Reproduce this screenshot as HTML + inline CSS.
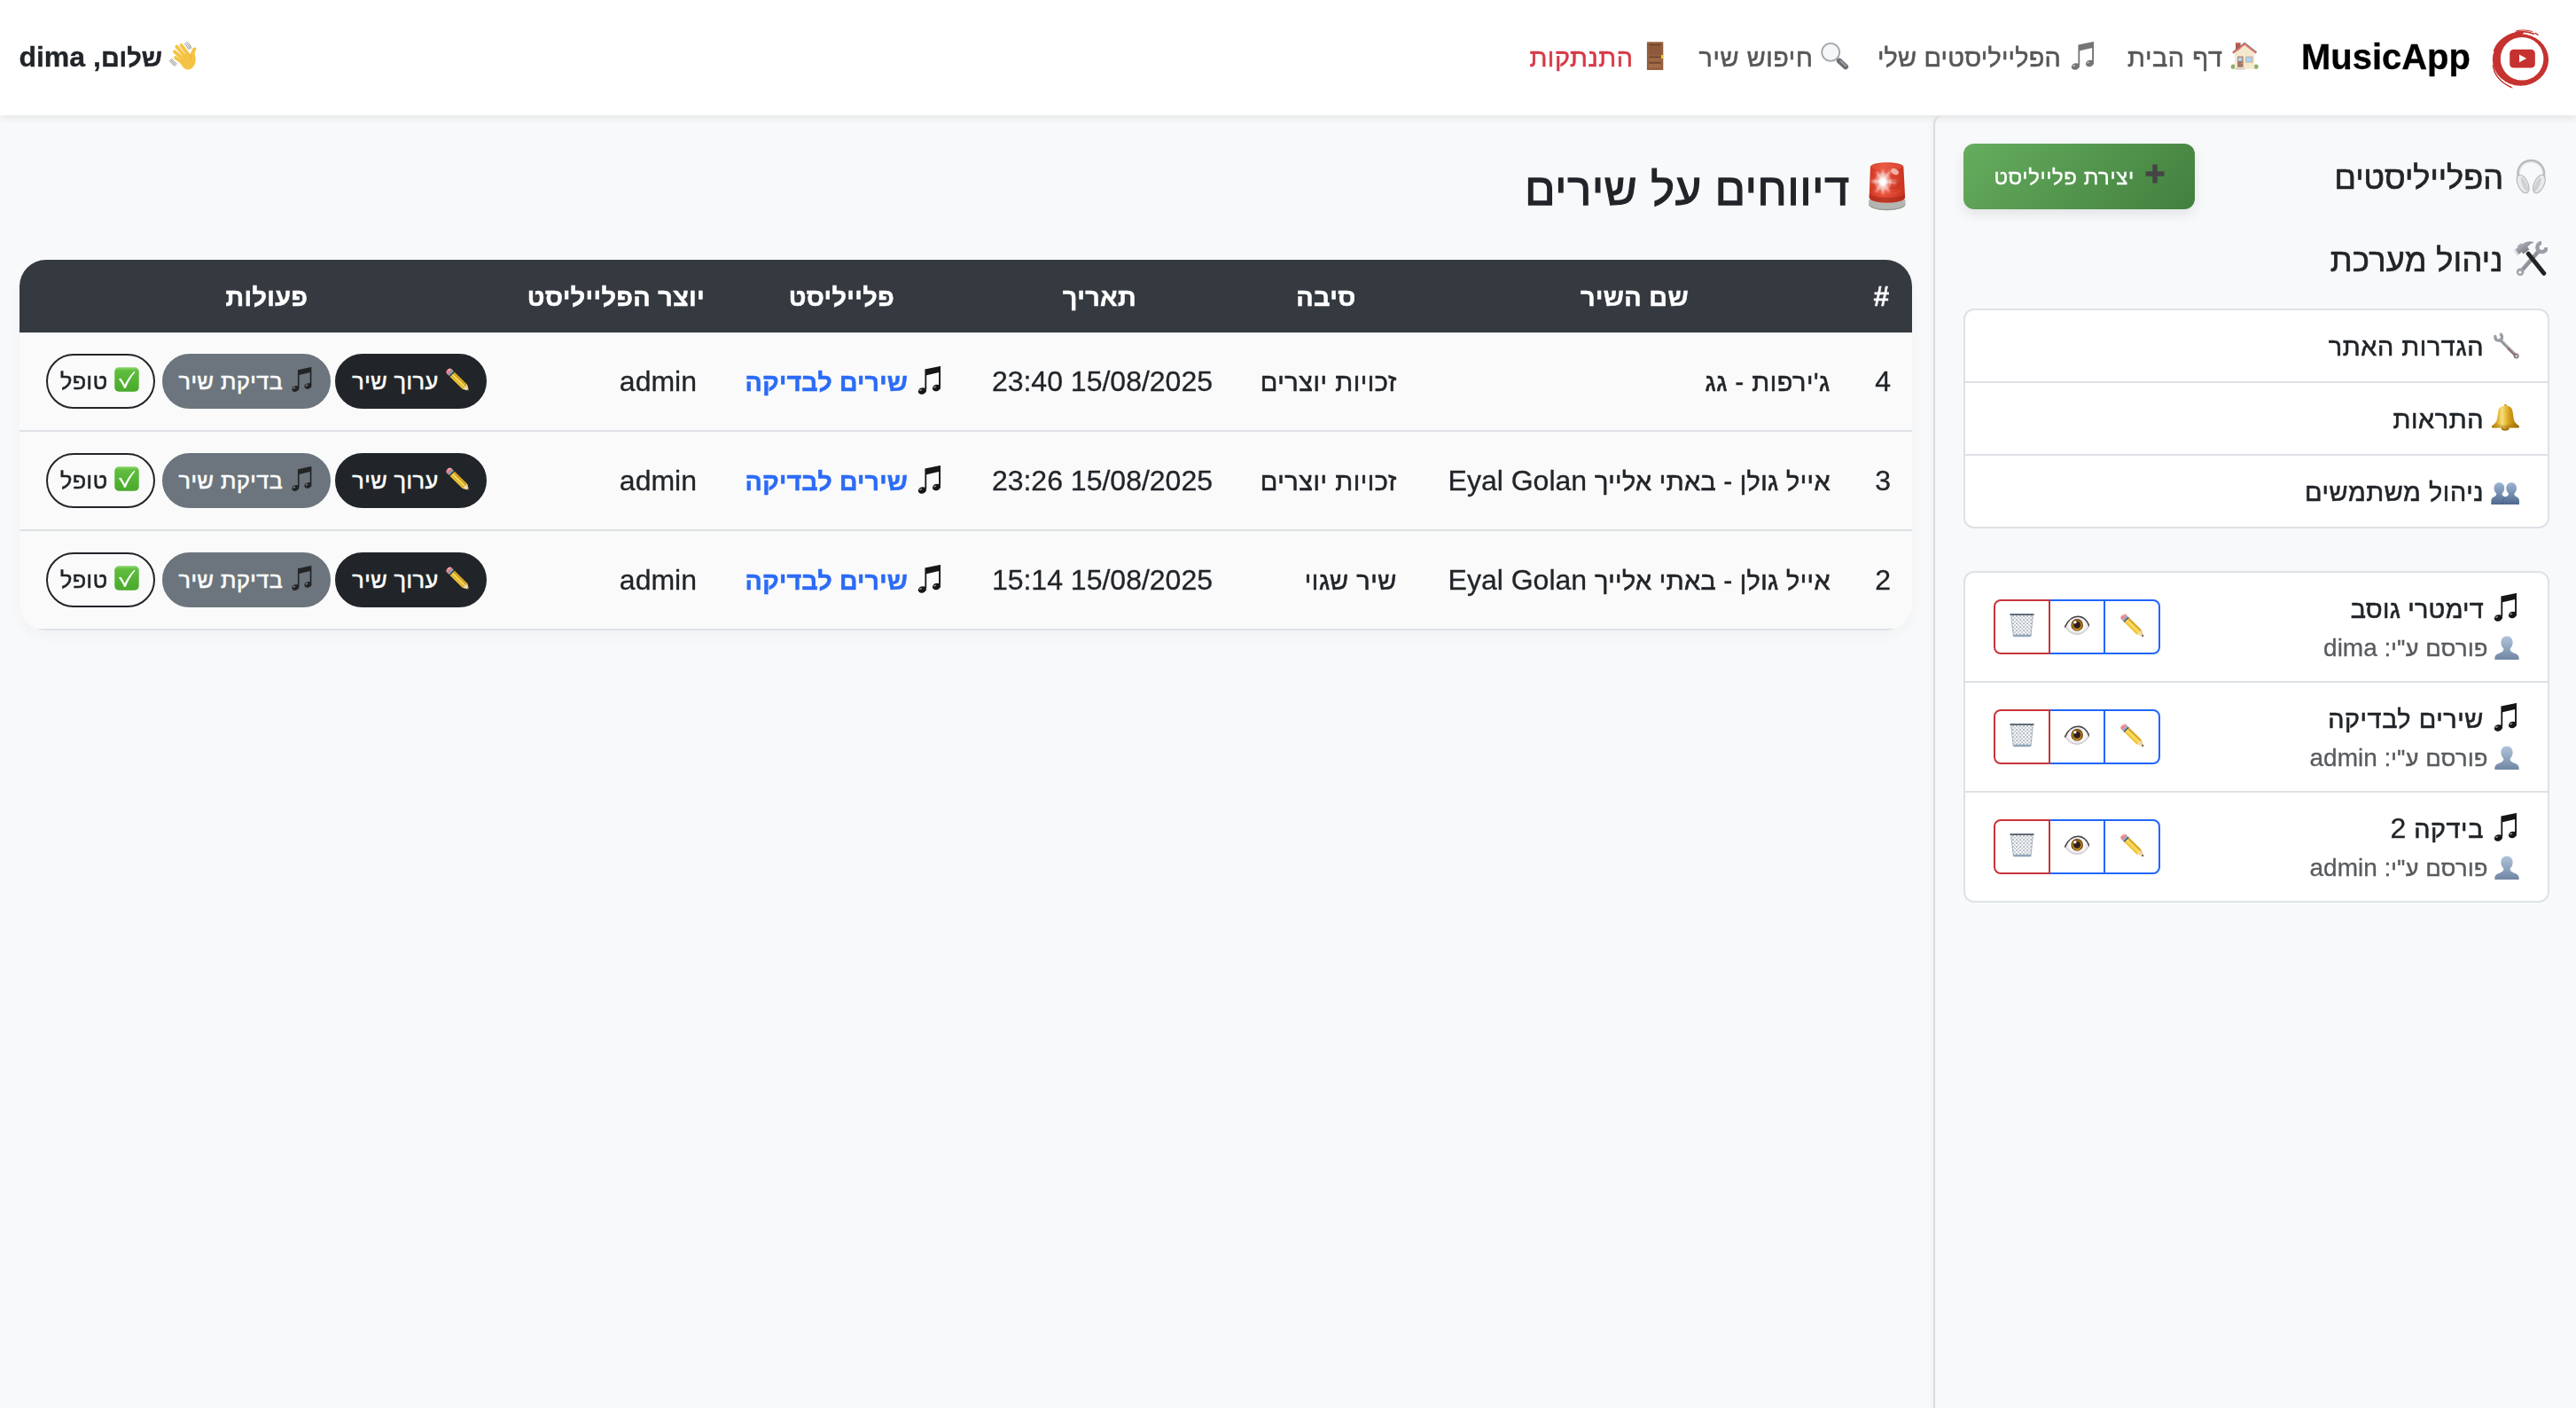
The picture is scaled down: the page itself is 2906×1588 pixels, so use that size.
<!DOCTYPE html>
<html lang="he" dir="rtl">
<head>
<meta charset="utf-8">
<title>MusicApp - דיווחים על שירים</title>
<style>
*{box-sizing:border-box}
html,body{margin:0;padding:0}
body{width:2906px;height:1588px;overflow:hidden;background:#f8f9fa;color:#212529;
 font-family:"Liberation Sans","DejaVu Sans",sans-serif;font-size:32px;line-height:48px;direction:rtl;position:relative;-webkit-text-stroke:.3px currentColor}
.e{display:inline-block;width:1em;height:1em;vertical-align:-0.14em;overflow:visible;color:#161616}
.h{font-size:.9em;letter-spacing:.02em;-webkit-text-stroke:.55px currentColor;margin-right:-.03em}
b .h,.bd .h{letter-spacing:0;-webkit-text-stroke:.45px currentColor}
a{text-decoration:none;color:inherit}
/* NAVBAR */
.nav{position:absolute;left:0;top:0;width:2906px;height:130px;background:#fff;box-shadow:0 4px 8px rgba(0,0,0,.075);z-index:5}
.nav .logo{position:absolute;left:2808px;top:28px;width:72px;height:74px}
.nav .brand{position:absolute;right:119px;top:40px;font-size:40px;line-height:48px;font-weight:bold;color:#000;direction:ltr}
.nav .lnk{position:absolute;top:39.5px;line-height:48px;white-space:nowrap;color:#575757}
.nav .lnk .e{opacity:.9}
.nav .lnk .e.n{opacity:1;color:#757578}
.nav .lnk.out{color:#d63a48}
.nav .lnk.w2 .h{letter-spacing:.2px}
.hd .h{letter-spacing:.3px;-webkit-text-stroke:.5px currentColor}
.ls1 .h{letter-spacing:.38px}
.ls2 .h{letter-spacing:.23px}
.side h5.ls3 .h{letter-spacing:.36px}
.newbtn .h{letter-spacing:.62px;-webkit-text-stroke:.4px currentColor}
.nav .lnk.out .e{opacity:1}
.nav .hello{position:absolute;right:2683px;top:39.5px;line-height:48px;font-weight:bold;color:#212529;white-space:nowrap}
/* SIDEBAR */
.side{position:absolute;left:2181px;top:130px;width:725px;height:1470px;border-left:2px solid #dcdcdc;border-top-left-radius:10px;background:#f8f9fa;box-shadow:-3px 0 6px rgba(0,0,0,.035)}
.side h5{position:absolute;margin:0;right:32px;font-size:40px;line-height:48px;font-weight:normal;white-space:nowrap;color:#212529}
.side h5 .h{letter-spacing:0;-webkit-text-stroke:.7px currentColor}
.newbtn{position:absolute;left:32px;top:32px;width:261px;height:74px;border-radius:12px;color:#fff;font-size:26.5px;line-height:72px;text-align:right;
 background:linear-gradient(135deg,#66ad5e 0%,#417f3e 100%);box-shadow:0 6px 14px rgba(0,0,0,.09);white-space:nowrap}
.card{position:absolute;left:32px;width:661px;background:#fff;border:2px solid #dee2e6;border-radius:12px;overflow:hidden}
.li{height:82px;border-bottom:2px solid #dee2e6;padding:16px 32px 0 0;line-height:48px;white-space:nowrap}
.li:last-child{border-bottom:0;height:80px}
.pl{height:124px;border-bottom:2px solid #dee2e6;position:relative}
.pl:last-child{border-bottom:0;height:122px}
.pl .t{position:absolute;right:32px;top:16px;font-size:32px;line-height:48px;white-space:nowrap}
.pl .s{position:absolute;right:32px;top:64px;font-size:28px;line-height:42px;color:#595c5f;white-space:nowrap}
.pl .s .e{opacity:.8}
.bg{position:absolute;left:32px;top:30px;height:62px;width:188px;direction:rtl;display:flex}
.bg span{display:block;width:64px;height:62px;border:2px solid #2166fb;margin-left:-2px;text-align:center;font-size:28px;line-height:56px}
.bg span:first-child{border-radius:0 8px 8px 0}
.bg span:last-child{border-radius:8px 0 0 8px;border-color:#c9333a;margin-left:0;position:relative}
/* MAIN */
h2{position:absolute;margin:0;right:749px;top:178px;font-size:56px;line-height:67px;font-weight:500;white-space:nowrap;color:#212529}
h2 .h{-webkit-text-stroke:1.3px currentColor;letter-spacing:.016em}
.tbl{position:absolute;left:22px;top:293px;width:2135px;height:418px;border-radius:30px;overflow:hidden;background:#fafafa;box-shadow:0 6px 20px rgba(0,0,0,.045)}
.tbl .hd{position:absolute;left:0;top:0;width:100%;height:82px;background:#343a40;color:#fff;font-weight:bold}
.tbl .hd div{position:absolute;top:17px;line-height:48px;text-align:center;white-space:nowrap}
.row{position:absolute;left:0;width:100%;height:112px;border-bottom:2px solid #dee2e6}
.row .c{position:absolute;top:31px;line-height:48px;white-space:nowrap}
.row a.p{color:#2b6bf7;font-weight:bold}
.b{position:absolute;top:24px;height:62px;border-radius:31px;font-size:28px;line-height:58px;text-align:center;white-space:nowrap;border:2px solid transparent}
.b.k{background:#212529;color:#fff;border-color:#212529}
.b.g{background:#6c757d;color:#fff;border-color:#6c757d}
.b.o{background:transparent;color:#212529;border-color:#212529;padding-right:2.5px}
.b .e{vertical-align:-.105em}
</style>
</head>
<body>
<svg width="0" height="0" style="position:absolute"><defs>
<linearGradient id="g-bust" x1="0" y1="0" x2="0" y2="1"><stop offset="0" stop-color="#9db6d3"/><stop offset="1" stop-color="#4d688d"/></linearGradient>
<linearGradient id="g-bell" x1="0" y1="0" x2="1" y2="0"><stop offset="0" stop-color="#a8740a"/><stop offset=".22" stop-color="#e3b32c"/><stop offset=".38" stop-color="#f7e07c"/><stop offset=".62" stop-color="#d8a21a"/><stop offset="1" stop-color="#98690a"/></linearGradient>
<linearGradient id="g-chk" x1="0" y1="0" x2="0" y2="1"><stop offset="0" stop-color="#8ad86c"/><stop offset=".14" stop-color="#60bd3e"/><stop offset="1" stop-color="#49a92c"/></linearGradient>
<linearGradient id="g-sir" x1="0" y1="0" x2="1" y2="0"><stop offset="0" stop-color="#d23824"/><stop offset=".4" stop-color="#e8503a"/><stop offset="1" stop-color="#c9321f"/></linearGradient>
<linearGradient id="g-stl" x1="0" y1="0" x2="1" y2="1"><stop offset="0" stop-color="#cfd2d7"/><stop offset=".5" stop-color="#8f939a"/><stop offset="1" stop-color="#5f636a"/></linearGradient>
<radialGradient id="g-eye" cx=".5" cy=".5" r=".6"><stop offset=".5" stop-color="#fff"/><stop offset="1" stop-color="#c6bcc6"/></radialGradient>
<filter id="f-blur" x="-20%" y="-20%" width="140%" height="140%"><feGaussianBlur stdDeviation=".8"/></filter>
<pattern id="p-mesh" width="4.6" height="4.6" patternUnits="userSpaceOnUse"><rect width="4.6" height="4.6" fill="#fbfcfd"/><path d="M0 0L4.6 4.6M4.6 0L0 4.6" stroke="#6f7c8a" stroke-width=".55"/></pattern>

<symbol id="i-house" viewBox="0 0 32 32">
 <circle cx="3.3" cy="28.2" r="2.6" fill="#7fa858"/><circle cx="29" cy="28.2" r="2.6" fill="#7fa858"/>
 <rect x="6" y="1.2" width="5.6" height="9" fill="#b5493c"/>
 <path d="M4.9 13L16.2 4L27.3 13V30.7H4.9Z" fill="#f5e6c8"/>
 <path d="M2.5 11.9L16.2 1.2L29.8 11.9L28.6 13.7L16.2 4L3.7 13.7Z" fill="#e2675b"/>
 <path d="M2.5 11.9L16.2 1.2L29.8 11.9" fill="none" stroke="#5c5c5c" stroke-width="1"/>
 <rect x="8.1" y="16.6" width="6.5" height="12.2" fill="#9b6b5a"/>
 <rect x="8.9" y="17.8" width="4.4" height="4" fill="#a9d1f1"/>
 <circle cx="12.9" cy="24.5" r=".6" fill="#e8c44a"/>
 <rect x="17.3" y="16.6" width="8" height="6.9" fill="#b39a86"/>
 <rect x="18" y="17.3" width="6.4" height="5.5" fill="#a4cdf0"/>
 <rect x="6.1" y="29.7" width="10.7" height="1.9" fill="#cfcac4"/>
</symbol>

<symbol id="i-note" viewBox="0 0 32 32" fill="currentColor">
 <path d="M11.4 3.6L29 -.1V22.8H27.1V6.9L13.2 10.3V26.3H11.4Z"/>
 <ellipse cx="8.4" cy="28" rx="4.7" ry="3.6" transform="rotate(-20 8.4 28)"/>
 <ellipse cx="24.5" cy="24.5" rx="4.7" ry="3.6" transform="rotate(-20 24.5 24.5)"/>
 <ellipse cx="6.6" cy="27" rx="1.7" ry=".8" transform="rotate(-25 6.6 27)" fill="#fff" opacity=".55"/>
 <ellipse cx="22.7" cy="23.5" rx="1.7" ry=".8" transform="rotate(-25 22.7 23.5)" fill="#fff" opacity=".55"/>
</symbol>

<symbol id="i-mag" viewBox="0 0 32 32">
 <circle cx="11.2" cy="11.9" r="10" fill="#f5f6f7" stroke="#9c9fa3" stroke-width="1.8"/>
 <path d="M18.4 19.3L20.6 21.3" stroke="#a9acb0" stroke-width="2.4"/>
 <path d="M21 21.8L28 28.2" stroke="#5d6065" stroke-width="6.2" stroke-linecap="round"/>
 <path d="M22.2 21.8L28.3 27.3" stroke="#a2a8b0" stroke-width="1.2" stroke-linecap="round"/>
</symbol>

<symbol id="i-door" viewBox="0 0 32 32">
 <rect x="6.9" y=".2" width="18.4" height="31.8" rx=".6" fill="#94603e"/>
 <rect x="9.4" y="2.8" width="13.2" height="11.6" fill="#8c593a"/>
 <rect x="9.4" y="2.8" width="13.2" height="1.4" fill="#6a4128"/>
 <rect x="9.4" y="16.8" width="13.2" height="1.5" fill="#6a4128"/>
 <rect x="9.4" y="18.3" width="13.2" height="3.6" fill="#9f6947"/>
 <rect x="9.4" y="23.3" width="13.2" height="1.5" fill="#6a4128"/>
 <rect x="9.4" y="24.8" width="13.2" height="4.6" fill="#a36c49"/>
 <rect x="23" y="15" width="2.2" height="4.1" fill="#e9c83c"/>
</symbol>

<symbol id="i-wave" viewBox="0 0 32 32">
 <g stroke="#f5c343" stroke-width="3.8" stroke-linecap="round">
  <path d="M13.5 4L21 14"/><path d="M8.3 5.6L18 17"/><path d="M6 11.3L16 20"/><path d="M7 18L14.5 23.5"/>
 </g>
 <path d="M11.5 21.5L19.5 11L23 14.3C24.6 13 24.8 10 26.6 7.6C28 6 30.6 6.4 30.5 8.1C30.4 9.7 28.8 10.6 28.7 12.6C28.6 15.2 30.3 18 29.6 22.2C28.8 27.2 25 31.6 21 31.6C17 31.6 13.5 27.5 11.5 21.5Z" fill="#f5c343"/>
 <path d="M23 14.5C24.5 16 25 18 24.5 20" fill="none" stroke="#e3a634" stroke-width=".8" stroke-linecap="round"/>
 <g fill="none" stroke="#555" stroke-width=".65" stroke-linecap="round">
  <path d="M17.4 2.6Q20.6 4.8 21.8 8.6"/><path d="M18.6 1.3Q22.4 3.8 23.5 8"/><path d="M19.9 .3Q24 3 24.8 7.3"/>
  <path d="M.4 21.2Q2.4 25.2 6.3 27.3"/><path d="M1.6 20.3Q3.6 24 7.3 26.2"/><path d="M3 19.6Q4.8 23 8.3 25"/>
 </g>
</symbol>

<symbol id="i-hp" viewBox="0 0 32 32">
 <path d="M5.4 16C4.2 7.6 9.6 1.6 17 1.6C24.4 1.6 29.8 7.6 28.6 16" fill="none" stroke="#b9bbbe" stroke-width="2.2"/>
 <path d="M6.8 15C5.8 8.4 10.6 3.2 17 3.2C23.4 3.2 28.2 8.4 27.2 15" fill="none" stroke="#e6e7e9" stroke-width="1.1"/>
 <ellipse cx="9.7" cy="22.8" rx="4.5" ry="8.8" transform="rotate(-25 9.7 22.8)" fill="#e9eaeb" stroke="#b3b5b8" stroke-width=".9"/>
 <ellipse cx="24.3" cy="22.8" rx="4.5" ry="8.8" transform="rotate(25 24.3 22.8)" fill="#e9eaeb" stroke="#b3b5b8" stroke-width=".9"/>
 <ellipse cx="11.3" cy="23.6" rx="2" ry="7.2" transform="rotate(-25 11.3 23.6)" fill="#cfd0d2"/>
 <ellipse cx="22.7" cy="23.6" rx="2" ry="7.2" transform="rotate(25 22.7 23.6)" fill="#cfd0d2"/>
</symbol>

<symbol id="i-tools" viewBox="0 0 32 32">
 <path d="M7.6 28.4L23.6 10" stroke="url(#g-stl)" stroke-width="3.7" stroke-linecap="round"/>
 <circle cx="7.3" cy="28.6" r="3.4" fill="#9da1a8"/><circle cx="7.1" cy="28.9" r="1.3" fill="#f8f9fa"/>
 <path d="M30.9 6.4A4.1 4.1 0 1 1 26.4 2.3" fill="none" stroke="#9a9ea6" stroke-width="3.6"/>
 <path d="M14.6 12.2L28.6 29.8" stroke="#232323" stroke-width="4" stroke-linecap="round"/>
 <path d="M1.4 9.2L4.6 13.6L8.6 10.6L10 12.4L15.4 8.4L13.8 6C15.6 4 17.4 2.6 19.8 1.8C16.2 .2 12 1 9.2 3.4L8 2.6L4.4 5.2L5.2 6.4Z" fill="url(#g-stl)"/>
 <path d="M1.4 9.2L4.6 13.6L6 12.6L2.8 8.2Z" fill="#e3e5e8"/>
</symbol>

<symbol id="i-wrench" viewBox="0 0 32 32">
 <path d="M10.6 10.2L27.8 27.6" stroke="#8f9198" stroke-width="3.4" stroke-linecap="round"/>
 <path d="M20 20L27.8 27.6" stroke="#8a7476" stroke-width="3.4" stroke-linecap="round"/>
 <path d="M11.6 10L27 25.4" stroke="#c9ccd1" stroke-width=".9" stroke-linecap="round"/>
 <circle cx="28.6" cy="28.4" r="3" fill="#8b777a"/><circle cx="28.8" cy="28.6" r="1.1" fill="#fff"/>
 <path d="M10.2 3.6A3.9 3.9 0 1 1 5.4 5.1" fill="none" stroke="#9a9da4" stroke-width="3.4"/>
</symbol>

<symbol id="i-bell" viewBox="0.9 0 32 32" overflow="visible">
 <ellipse cx="17" cy="28" rx="4.5" ry="2.8" fill="#a9700a"/>
 <ellipse cx="16.4" cy="27.6" rx="2.2" ry="1.2" fill="#e3a83a" opacity=".8"/>
 <rect x="16" y=".9" width="2.6" height="2.4" rx=".9" fill="#c08a0c"/>
 <path d="M17.3 2.6C12.5 2.6 9.6 5 9.2 9L8 17C7.6 20.5 5.5 23 2 25.2C1.4 26.2 1.8 27.6 3 27.6H31.6C32.8 27.6 33.2 26.2 32.6 25.2C29.1 23 27 20.5 26.6 17L25.4 9C25 5 22.1 2.6 17.3 2.6Z" fill="url(#g-bell)"/>
 <path d="M5 23.4C11 25.6 23.6 25.6 29.6 23.4" fill="none" stroke="#8f6206" stroke-width="1" opacity=".45"/>
 <path d="M3 26.6H31.6" stroke="#8f6206" stroke-width="1.4" opacity=".5"/>
</symbol>

<symbol id="i-busts" viewBox="0 0 32 32" overflow="visible">
 <g fill="url(#g-bust)" transform="translate(-.1 -.3) scale(1.01)">
 <path d="M9.4 7.4C12.9 7.4 15.2 10 15.2 13.6C15.2 16.2 14 18.4 12.6 19.6C12.4 21.4 13.4 22.4 15.4 23.2C17.6 24 19 25.4 19 28V32H.4V28C.4 25.4 1.6 24 3.8 23.2C5.6 22.4 6.4 21.4 6.2 19.6C4.8 18.4 3.6 16.2 3.6 13.6C3.6 10 5.9 7.4 9.4 7.4Z"/>
 <path d="M23 7.4C26.5 7.4 28.8 10 28.8 13.6C28.8 16.2 27.6 18.4 26.2 19.6C26 21.4 27 22.4 28.6 23.2C30.6 24 31.8 25.4 31.8 28V32H13V28C13 25.4 14.6 24 17 23.2C19 22.4 20 21.4 19.8 19.6C18.4 18.4 17.2 16.2 17.2 13.6C17.2 10 19.5 7.4 23 7.4Z"/>
 </g>
 <path d="M13.4 32V28.4C13.4 26 14.8 24.4 17 23.4" fill="none" stroke="#3d5678" stroke-width=".7" opacity=".7"/>
</symbol>

<symbol id="i-bust" viewBox="0 0 32 32">
 <path d="M16 1.6C20.6 1.6 23.6 5 23.6 9.8C23.6 13.4 22 16.2 20.2 17.8C20 20.4 21.2 21.8 24.4 23C28.6 24.4 31.6 26 31.6 30V32H.4V30C.4 26 3.4 24.4 7.6 23C10.8 21.8 12 20.4 11.8 17.8C10 16.2 8.4 13.4 8.4 9.8C8.4 5 11.4 1.6 16 1.6Z" fill="url(#g-bust)"/>
</symbol>

<symbol id="i-pencil" viewBox="0 0 32 32">
 <g transform="translate(3.6 3.8) rotate(44.5)">
  <path d="M2.4 -4.3H4V4.3H2.4C.4 4.3 -.7 2.5 -.7 0C-.7 -2.5 .4 -4.3 2.4 -4.3Z" fill="#ee8488"/>
  <path d="M1.6 -3.2C.8 -2.4 .4 -1.2 .4 0" fill="none" stroke="#f9c0c2" stroke-width="1.1" stroke-linecap="round"/>
  <rect x="4" y="-4.3" width="2.6" height="8.6" fill="#93a7c2"/>
  <rect x="6.6" y="-4.3" width="1.6" height="8.6" fill="#3d424c"/>
  <rect x="8.2" y="-4.3" width="22.4" height="2.9" fill="#d8a722"/>
  <rect x="8.2" y="-1.4" width="22.4" height="3" fill="#fadb55"/>
  <rect x="8.2" y="1.6" width="22.4" height="2.7" fill="#f1c232"/>
  <path d="M30.6 -4.3L38.5 0L30.6 4.3Z" fill="#f6dca6"/>
  <path d="M30.6 -4.3L38.5 0L30.6 -1.4Z" fill="#e6c58a"/>
  <path d="M35.9 -1.4L38.5 0L35.9 1.4Z" fill="#26282c"/>
 </g>
</symbol>

<symbol id="i-eye" viewBox="0 0 32 32">
 <path d="M.4 18.2C5 8 12 4.6 17.5 4.6C24 4.6 29 9.6 32 17.1C27.5 24.4 22 27.9 16.5 27.9C10 27.9 4.6 24.4 .4 18.2Z" fill="url(#g-eye)"/>
 <circle cx="16.2" cy="15.9" r="7.8" fill="#6a3f10"/>
 <circle cx="16.2" cy="16.1" r="6.5" fill="#b98a18"/>
 <path d="M10.2 18.4A6.5 6.5 0 0 0 22.4 18A7 7 0 0 1 10.2 18.4Z" fill="#e0c030" opacity=".85"/>
 <circle cx="16.2" cy="15.7" r="4.9" fill="#5a3620"/>
 <circle cx="16.2" cy="15.7" r="3.7" fill="#2e1c22"/>
 <circle cx="13.6" cy="12.4" r="1.9" fill="#fff"/>
 <path d="M32 17.1C27.5 24.4 22 27.9 16.5 27.9C10 27.9 4.6 24.4 .4 18.2" fill="none" stroke="#b9adb4" stroke-width=".7"/>
 <path d="M.5 18.4C5 8.2 12 4.9 17.5 4.9C24 4.9 29 9.8 31.9 17.2" fill="none" stroke="#474344" stroke-width="1.7" stroke-linecap="round"/>
</symbol>

<symbol id="i-trash" viewBox="0 0 32 32">
 <path d="M1.8 3.2H30.2L27.4 30.6H5Z" fill="url(#p-mesh)"/>
 <path d="M1.8 3.2L5 30.6M30.2 3.2L27.4 30.6" fill="none" stroke="#8a98a8" stroke-width=".8"/>
 <rect x="4.7" y="28.2" width="23" height="2.8" rx="1.2" fill="#8fa5bb"/>
 <rect x=".4" y="1.2" width="31.2" height="2.3" rx="1.1" fill="#525960"/>
 <rect x="1" y="1" width="30" height=".8" rx=".4" fill="#8eaac8"/>
</symbol>

<symbol id="i-siren" viewBox="0 0 32 32">
 <path d="M4.1 24.2V27.2A11.8 3.8 0 0 0 27.7 27.2V24.2Z" fill="#b4b4b1"/>
 <path d="M4.1 26.4V27.2A11.8 3.8 0 0 0 27.7 27.2V26.4A11.8 3.8 0 0 1 4.1 26.4Z" fill="#9a9a97"/>
 <path d="M5.1 3C5.1 -.9 26.5 -.9 26.5 3L27.5 22.6C27.5 27.2 4.4 27.2 4.4 22.6Z" fill="url(#g-sir)"/>
 <ellipse cx="15.8" cy="2.9" rx="10.2" ry="2.1" fill="#ef6a52" opacity=".35"/>
 <path d="M4.5 20.4C8 23.4 24 23.4 27.4 20.4L27.5 22.6C27.5 27.2 4.4 27.2 4.4 22.6Z" fill="#a3281a" opacity=".6"/>
 <path d="M6.4 17.6C10 20.6 22 20.6 25.6 17.6C25 21.6 7 21.6 6.4 17.6Z" fill="#f0563e" opacity=".55"/>
 <g filter="url(#f-blur)"><g stroke="#fff" stroke-linecap="round" opacity=".92"><path d="M13.2 5.6V19.6" stroke-width="1.3"/><path d="M6.6 12.3L21.4 12.7" stroke-width="1.3"/><path d="M9.2 18.6L17.4 6.2" stroke-width="1.1"/><path d="M9.6 6.6L16.8 18.6" stroke-width="1.1"/></g>
 <circle cx="13.2" cy="12.5" r="3" fill="#fff"/></g>
 <circle cx="13.2" cy="12.5" r="5.6" fill="#fff" opacity=".28"/>
 <ellipse cx="20.8" cy="6" rx="2.7" ry="1.8" transform="rotate(28 20.8 6)" fill="#f7c3b8" opacity=".85"/>
 <path d="M19 12.4C22 12 24 13.2 23.4 15C22.8 16.6 20 17.2 18.6 16.4" fill="none" stroke="#b9301f" stroke-width=".9" opacity=".55"/>
</symbol>

<symbol id="i-check" viewBox="0 0 32 32">
 <rect x=".3" y=".3" width="31.4" height="31.4" rx="5.6" fill="url(#g-chk)"/>
 <path d="M5.5 15.4L8.6 14.5C10.6 17.3 12.2 20.1 13.4 22.9C16.6 16.3 20.8 10.3 25.8 5.5L26.8 6.2C21.7 12.4 17.7 19.4 14.7 27H12.5C10.8 22.6 8.4 18.8 5.5 15.4Z" fill="#fff"/>
</symbol>

<symbol id="i-plus" viewBox="0 0 32 32">
 <path d="M16 4.8V27.2M4.8 16H27.2" stroke="#454545" stroke-width="5.8"/>
</symbol>
</defs></svg>


<div id="all" style="opacity:.999;position:absolute;left:0;top:0;width:2906px;height:1588px">
<div class="nav">
 <svg class="logo" viewBox="0 0 72 74">
  <path fill="#c5322f" fill-rule="evenodd" d="M3.85 39.45A31.6 29.2 0 1 0 67.05 39.45A31.6 29.2 0 1 0 3.85 39.45ZM12.8 38.3A24.3 24.3 0 1 1 61.4 38.3A24.3 24.3 0 1 1 12.8 38.3Z"/>
  <g fill="none" stroke="#c5322f" stroke-linecap="round">
   <path d="M6.6 29C10.5 18.5 22 9.6 37 9.2" stroke-width="3.4"/>
   <path d="M30 8.4C37 7 45 7.8 50.5 10.2" stroke-width="1.6"/>
   <path d="M31 6.6C37 5.4 44 5.8 48.6 7.6" stroke-width="1"/>
   <path d="M52 9.4L55 11.4" stroke-width="1.3"/>
   <path d="M4.2 46C6 56 13 65 24.5 70.2" stroke-width="1.3"/>
   <path d="M5.6 52C8.5 60 15 66.6 26 71" stroke-width="1"/>
  </g>
  <rect x="23.2" y="27.8" width="28.6" height="20.8" rx="4.4" fill="#c5322f"/>
  <path d="M34 33.5L42.2 37.9L34 42.2Z" fill="#fff"/>
 </svg>
 <a class="brand">MusicApp</a>
 <a class="lnk" style="right:358.5px"><svg class="e"><use href="#i-house"/></svg> <span class="h">דף הבית</span></a>
 <a class="lnk w2" style="right:541px"><svg class="e n"><use href="#i-note"/></svg> <span class="h">הפלייליסטים שלי</span></a>
 <a class="lnk" style="right:820.5px"><svg class="e"><use href="#i-mag"/></svg> <span class="h">חיפוש שיר</span></a>
 <a class="lnk out" style="right:1023.5px"><svg class="e"><use href="#i-door"/></svg> <span class="h">התנתקות</span></a>
 <div class="hello bd"><svg class="e"><use href="#i-wave"/></svg> <span class="h">שלום</span>, dima</div>
</div>

<div class="side">
 <h5 style="top:45px"><svg class="e"><use href="#i-hp"/></svg> <span class="h">הפלייליסטים</span></h5>
 <a class="newbtn"><svg class="e" style="position:absolute;left:200.6px;top:19.4px;width:30px;height:30px"><use href="#i-plus"/></svg><span style="position:absolute;right:69px;top:1px"><span class="h">יצירת פלייליסט</span></span></a>
 <h5 class="ls3" style="top:137.5px"><svg class="e"><use href="#i-tools"/></svg> <span class="h">ניהול מערכת</span></h5>
 <div class="card" style="top:218px">
  <div class="li"><svg class="e"><use href="#i-wrench"/></svg> <span class="h">הגדרות האתר</span></div>
  <div class="li"><svg class="e"><use href="#i-bell"/></svg> <span class="h">התראות</span></div>
  <div class="li"><svg class="e"><use href="#i-busts"/></svg> <span class="h">ניהול משתמשים</span></div>
 </div>
 <div class="card" style="top:514px">
  <div class="pl"><div class="t ls2"><svg class="e"><use href="#i-note"/></svg> <span class="h">דימטרי גוסב</span></div><div class="s"><svg class="e"><use href="#i-bust"/></svg> <span class="h">פורסם ע"י</span>: dima</div>
   <div class="bg"><span><svg class="e"><use href="#i-pencil"/></svg></span><span><svg class="e"><use href="#i-eye"/></svg></span><span><svg class="e"><use href="#i-trash"/></svg></span></div></div>
  <div class="pl"><div class="t"><svg class="e"><use href="#i-note"/></svg> <span class="h">שירים לבדיקה</span></div><div class="s"><svg class="e"><use href="#i-bust"/></svg> <span class="h">פורסם ע"י</span>: admin</div>
   <div class="bg"><span><svg class="e"><use href="#i-pencil"/></svg></span><span><svg class="e"><use href="#i-eye"/></svg></span><span><svg class="e"><use href="#i-trash"/></svg></span></div></div>
  <div class="pl"><div class="t"><svg class="e"><use href="#i-note"/></svg> <span class="h">בידקה</span> 2</div><div class="s"><svg class="e"><use href="#i-bust"/></svg> <span class="h">פורסם ע"י</span>: admin</div>
   <div class="bg"><span><svg class="e"><use href="#i-pencil"/></svg></span><span><svg class="e"><use href="#i-eye"/></svg></span><span><svg class="e"><use href="#i-trash"/></svg></span></div></div>
 </div>
</div>

<h2><svg class="e"><use href="#i-siren"/></svg> <span class="h">דיווחים על שירים</span></h2>

<div class="tbl">
 <div class="hd">
  <div style="left:2066px;width:69px">#</div>
  <div style="left:1577px;width:489px"><span class="h">שם השיר</span></div>
  <div style="left:1370px;width:207px"><span class="h">סיבה</span></div>
  <div style="left:1066px;width:304px"><span class="h">תאריך</span></div>
  <div style="left:788px;width:278px"><span class="h">פלייליסט</span></div>
  <div style="left:557px;width:231px"><span class="h">יוצר הפלייליסט</span></div>
  <div style="left:0;width:557px"><span class="h">פעולות</span></div>
 </div>
 <div class="row" style="top:82px">
  <div class="c" style="right:24px">4</div>
  <div class="c" style="right:93px"><span class="h">ג'ירפות - גג</span></div>
  <div class="c" style="right:582px"><span class="h">זכויות יוצרים</span></div>
  <div class="c" style="right:789px">15/08/2025 23:40</div>
  <div class="c" style="right:1093px"><svg class="e"><use href="#i-note"/></svg> <a class="p bd"><span class="h">שירים לבדיקה</span></a></div>
  <div class="c" style="right:1371px">admin</div>
  <a class="b k" style="left:356px;width:171px"><svg class="e"><use href="#i-pencil"/></svg> <span class="h">ערוך שיר</span></a>
  <a class="b g" style="left:161px;width:190px"><svg class="e" style="opacity:.85"><use href="#i-note"/></svg> <span class="h">בדיקת שיר</span></a>
  <a class="b o" style="left:30px;width:123px"><svg class="e"><use href="#i-check"/></svg> <span class="h">טופל</span></a>
 </div>
 <div class="row" style="top:194px">
  <div class="c" style="right:24px">3</div>
  <div class="c ls1" style="right:93px"><span class="h">אייל גולן - באתי אלייך</span> Eyal Golan</div>
  <div class="c" style="right:582px"><span class="h">זכויות יוצרים</span></div>
  <div class="c" style="right:789px">15/08/2025 23:26</div>
  <div class="c" style="right:1093px"><svg class="e"><use href="#i-note"/></svg> <a class="p bd"><span class="h">שירים לבדיקה</span></a></div>
  <div class="c" style="right:1371px">admin</div>
  <a class="b k" style="left:356px;width:171px"><svg class="e"><use href="#i-pencil"/></svg> <span class="h">ערוך שיר</span></a>
  <a class="b g" style="left:161px;width:190px"><svg class="e" style="opacity:.85"><use href="#i-note"/></svg> <span class="h">בדיקת שיר</span></a>
  <a class="b o" style="left:30px;width:123px"><svg class="e"><use href="#i-check"/></svg> <span class="h">טופל</span></a>
 </div>
 <div class="row" style="top:306px">
  <div class="c" style="right:24px">2</div>
  <div class="c ls1" style="right:93px"><span class="h">אייל גולן - באתי אלייך</span> Eyal Golan</div>
  <div class="c" style="right:582px"><span class="h">שיר שגוי</span></div>
  <div class="c" style="right:789px">15/08/2025 15:14</div>
  <div class="c" style="right:1093px"><svg class="e"><use href="#i-note"/></svg> <a class="p bd"><span class="h">שירים לבדיקה</span></a></div>
  <div class="c" style="right:1371px">admin</div>
  <a class="b k" style="left:356px;width:171px"><svg class="e"><use href="#i-pencil"/></svg> <span class="h">ערוך שיר</span></a>
  <a class="b g" style="left:161px;width:190px"><svg class="e" style="opacity:.85"><use href="#i-note"/></svg> <span class="h">בדיקת שיר</span></a>
  <a class="b o" style="left:30px;width:123px"><svg class="e"><use href="#i-check"/></svg> <span class="h">טופל</span></a>
 </div>
</div>
</div>
</body>
</html>
